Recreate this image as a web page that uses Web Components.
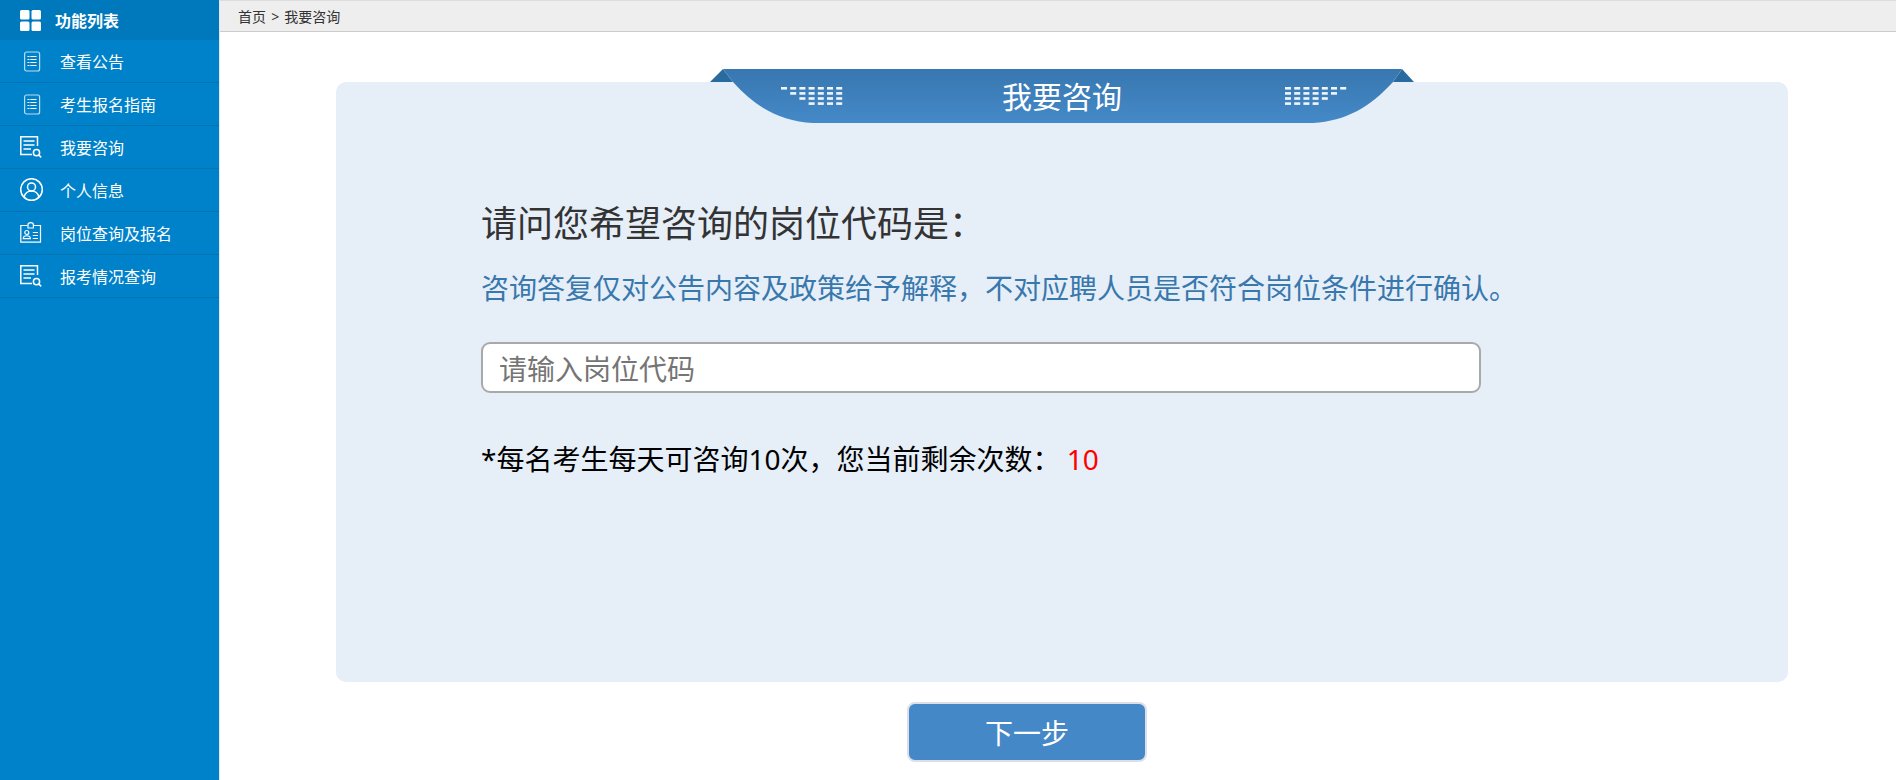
<!DOCTYPE html>
<html lang="zh">
<head>
<meta charset="utf-8">
<title>我要咨询</title>
<style>
  html, body { margin: 0; height: 100%; }
  body { font-family: "Noto Sans", "Noto Sans CJK SC", sans-serif; overflow: hidden; }
</style>
</head>
<body>
<app-shell>
  <side-menu slot="side">
    <menu-item icon="list">查看公告</menu-item>
    <menu-item icon="list">考生报名指南</menu-item>
    <menu-item icon="doc">我要咨询</menu-item>
    <menu-item icon="user">个人信息</menu-item>
    <menu-item icon="badge">岗位查询及报名</menu-item>
    <menu-item icon="doc">报考情况查询</menu-item>
  </side-menu>
  <bread-crumb slot="crumb">首页 &gt; 我要咨询</bread-crumb>
  <ask-panel heading="我要咨询">
    <h-text kind="q">请问您希望咨询的岗位代码是：</h-text>
    <h-text kind="note">咨询答复仅对公告内容及政策给予解释，不对应聘人员是否符合岗位条件进行确认。</h-text>
    <code-input placeholder="请输入岗位代码"></code-input>
    <h-text kind="count">*每名考生每天可咨询10次，您当前剩余次数： <b>10</b></h-text>
  </ask-panel>
  <next-button>下一步</next-button>
</app-shell>

<script>
const ICONS = {
  list: `<svg width="22" height="22" viewBox="0 0 22 22" fill="none" stroke="#fff">
    <rect x="4.600" y="2" width="15" height="19" rx="2" stroke="#bcdcf2" stroke-width="1.200"/>
    <path d="M7.500 6.500h9M7.500 9.500h9M7.500 12.500h9M7.500 15.500h9" stroke-width="1.100" stroke-dasharray="2 .8 7 0"/>
  </svg>`,
  doc: `<svg width="22" height="22" viewBox="0 0 22 22" fill="none" stroke="#fff" stroke-width="1.500">
    <path d="M12 18.600H.8V.8H17.500V10"/>
    <path d="M3.500 5h11M3.500 9h11M3.500 13h7.500"/>
    <circle cx="16.500" cy="16.700" r="3.100"/>
    <path d="M18.800 19l2.400 2.400"/>
  </svg>`,
  user: `<svg width="24" height="24" viewBox="0 0 24 24" fill="none" stroke="#fff" stroke-width="1.500">
    <circle cx="11.500" cy="11.500" r="10.800"/>
    <circle cx="11.500" cy="8.900" r="4"/>
    <path d="M4.100 19.100c1-4 4-6 7.400-6s6.400 2 7.400 6"/>
  </svg>`,
  badge: `<svg width="22" height="22" viewBox="0 0 22 22" fill="none" stroke="#fff" stroke-width="1.200">
    <path d="M7.500 3.500H.8v16.600h19.700V3.500h-6.500"/>
    <path d="M8 6V2.800a2.700 2.200 0 0 1 5.400 0V6z"/>
    <circle cx="6.800" cy="10.500" r="2"/>
    <path d="M3.300 16.600c0-3.800 7-3.800 7 0z"/>
    <path d="M12.800 10.500h5.200M12.800 13.500h5.200M12.800 16.500h5.200"/>
  </svg>`
};

class AppShell extends HTMLElement {
  constructor() {
    super();
    this.attachShadow({ mode: 'open' }).innerHTML = `
      <style>
        :host { display: grid; grid-template-columns: 219px 1fr; height: 780px; background: #fff; }
        .main { display: flex; flex-direction: column; border-left: 1px solid #dfe8f0; min-width: 0; }
        .body { display: flex; flex-direction: column; align-items: flex-start; padding: 50px 0 0 116px; }
      </style>
      <slot name="side"></slot>
      <div class="main">
        <slot name="crumb"></slot>
        <div class="body"><slot></slot></div>
      </div>`;
  }
}

class SideMenu extends HTMLElement {
  constructor() {
    super();
    this.attachShadow({ mode: 'open' }).innerHTML = `
      <style>
        :host { display: block; background: #0082ca; color: #fff; font-size: 16px; }
        .head { display: flex; align-items: center; height: 40px; background: #0079bc; font-weight: 700; padding-left: 20px; gap: 14px; }
        .head svg { display: block; }
      </style>
      <div class="head">
        <svg width="21" height="21" viewBox="0 0 21 21" fill="#fff">
          <rect width="9.500" height="9.500" rx="1.500"/><rect x="11.500" width="9.500" height="9.500" rx="1.500"/>
          <rect y="11.500" width="9.500" height="9.500" rx="1.500"/><rect x="11.500" y="11.500" width="9.500" height="9.500" rx="1.500"/>
        </svg>
        <span>功能列表</span>
      </div>
      <slot></slot>`;
  }
}

class MenuItem extends HTMLElement {
  constructor() {
    super();
    this.attachShadow({ mode: 'open' });
  }
  connectedCallback() {
    this.shadowRoot.innerHTML = `
      <style>
        :host { display: flex; align-items: center; height: 42px; border-bottom: 1px solid #0573b0; box-sizing: content-box; }
        .ic { width: 60px; padding-left: 20px; box-sizing: border-box; display: flex; }
        .ic svg { display: block; }
      </style>
      <span class="ic">${ICONS[this.getAttribute('icon')]}</span>
      <slot></slot>`;
  }
}

class BreadCrumb extends HTMLElement {
  constructor() {
    super();
    this.attachShadow({ mode: 'open' }).innerHTML = `
      <style>
        :host { display: block; height: 30px; line-height: 32px; background: #eee; border-top: 1px solid #ddd; border-bottom: 1px solid #ccc; padding-left: 18px; font-size: 14px; color: #333; word-spacing: 1.500px; }
      </style>
      <slot></slot>`;
  }
}

class AskPanel extends HTMLElement {
  constructor() {
    super();
    this.attachShadow({ mode: 'open' });
  }
  dots(flip) {
    // dotted ornament: staggered at the outer end
    let out = '';
    for (let r = 0; r < 4; r++) {
      for (let c = r; c < 7; c++) {
        const x = flip ? (6 - c) * 9.2 : c * 9.2;
        out += `<rect x="${x.toFixed(1)}" y="${(r * 5.1).toFixed(1)}" width="6" height="2.600"/>`;
      }
    }
    return `<svg class="dots ${flip ? 'r' : 'l'}" width="62" height="19" viewBox="0 0 62 19" fill="#fff" fill-opacity=".92">${out}</svg>`;
  }
  connectedCallback() {
    this.shadowRoot.innerHTML = `
      <style>
        :host { display: block; position: relative; width: 1452px; height: 600px; box-sizing: border-box; background: #e6eef8; border-radius: 10px; padding: 115px 0 0 145px; color: #333; }
        .banner { position: absolute; left: 374px; top: -13px; width: 704px; height: 54px; }
        .banner > svg.shape { display: block; }
        .title { position: absolute; left: 0; right: 0; top: 0; height: 54px; line-height: 56px; text-align: center; color: #fff; font-size: 30px; }
        .dots { position: absolute; top: 18px; }
        .dots.l { left: 71px; }
        .dots.r { left: 575px; }
      </style>
      <div class="banner">
        <svg class="shape" width="704" height="54" viewBox="0 0 704 54">
          <defs><linearGradient id="g" x1="0" y1="0" x2="0" y2="1"><stop offset="0" stop-color="#3877b0"/><stop offset="1" stop-color="#4489c8"/></linearGradient></defs>
          <path d="M0 13L13 0L23 13z" fill="#2a6b9f"/>
          <path d="M704 13L692 0L683 13z" fill="#2a6b9f"/>
          <path d="M13 0H692L683 13C660 38 636 52 603 54H103C70 52 45 38 23 13z" fill="url(#g)"/>
        </svg>
        <div class="title">${this.getAttribute('heading')}</div>
        ${this.dots(false)}${this.dots(true)}
      </div>
      <slot></slot>`;
  }
}

class HText extends HTMLElement {
  constructor() {
    super();
    this.attachShadow({ mode: 'open' });
  }
  connectedCallback() {
    const k = this.getAttribute('kind');
    const st = {
      q: 'font-size:36px;line-height:54px;color:#333;',
      note: 'font-size:28px;line-height:42px;margin-top:16px;color:#3878ad;',
      count: 'font-size:28px;line-height:42px;margin-top:45px;color:#000;'
    }[k];
    this.shadowRoot.innerHTML = `
      <style>
        :host { display: block; ${st} white-space: nowrap; }
        ::slotted(b) { font-weight: 400; color: #f00; margin-left: -1px; }
      </style>
      <slot></slot>`;
  }
}

class CodeInput extends HTMLElement {
  constructor() {
    super();
    this.attachShadow({ mode: 'open' });
  }
  connectedCallback() {
    this.shadowRoot.innerHTML = `
      <style>
        :host { display: block; margin-top: 33px; }
        input { display: block; width: 1000px; height: 51px; box-sizing: border-box; border: 2px solid #a9a9a9; border-radius: 9px; background: #fff; padding: 0 16px; font: 28px "Noto Sans CJK SC", sans-serif; outline: none; }
        input::placeholder { color: #757575; opacity: 1; }
      </style>
      <input type="text" placeholder="${this.getAttribute('placeholder')}">`;
  }
}

class NextButton extends HTMLElement {
  constructor() {
    super();
    this.attachShadow({ mode: 'open' }).innerHTML = `
      <style>
        :host { display: block; margin: 20px 0 0 571px; }
        button { display: block; width: 240px; height: 60px; box-sizing: border-box; border: 2px solid #dcdfe8; border-radius: 8px; background: #4488c8; color: #fff; font: 28px "Noto Sans CJK SC", sans-serif; padding: 0; }
      </style>
      <button type="button"><slot></slot></button>`;
  }
}

customElements.define('app-shell', AppShell);
customElements.define('side-menu', SideMenu);
customElements.define('menu-item', MenuItem);
customElements.define('bread-crumb', BreadCrumb);
customElements.define('ask-panel', AskPanel);
customElements.define('h-text', HText);
customElements.define('code-input', CodeInput);
customElements.define('next-button', NextButton);
</script>
</body>
</html>
